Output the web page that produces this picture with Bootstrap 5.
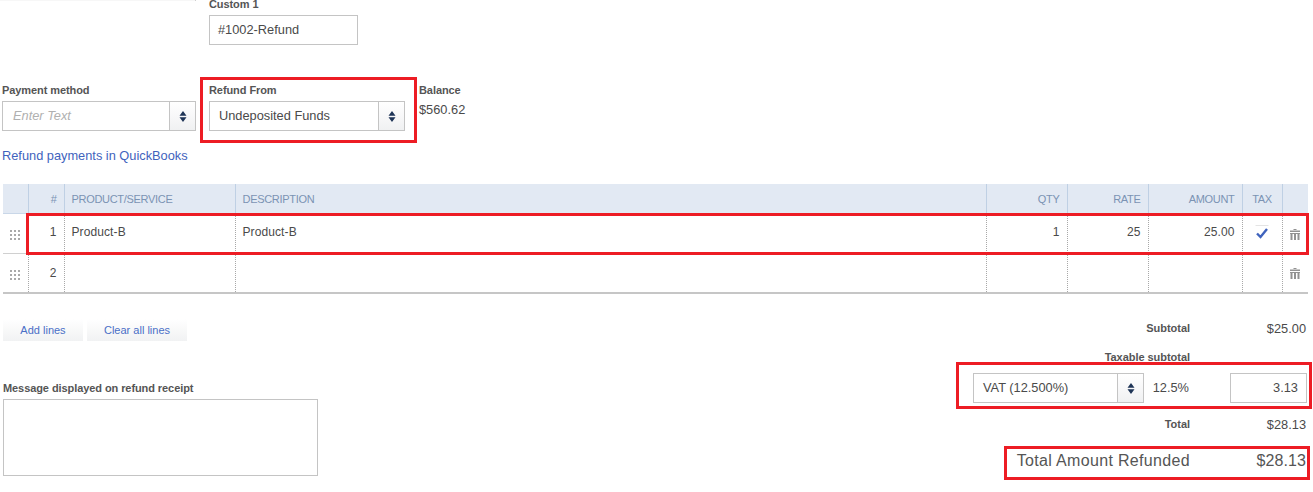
<!DOCTYPE html>
<html lang="en">
<head>
  <meta charset="UTF-8">
  <meta name="viewport" content="width=device-width, initial-scale=1.0">
  <title>Refund Receipt</title>
  <link href="https://cdn.jsdelivr.net/npm/bootstrap@5.3.0/dist/css/bootstrap.min.css" rel="stylesheet">
  <style>
    html, body { height: 492px; overflow: hidden; }
    body {
      background: #fff;
      color: #4a4a4a;
      font-family: "Liberation Sans", Arial, sans-serif;
      font-size: 12.8px;
    }
    .sheet { position: relative; width: 1313px; height: 492px; overflow: hidden; }
    .top-rule { width: 196px; height: 1px; background: #f7f7f7; border-right: 1px solid #cfcfcf; }

    .field-label { display: block; font-weight: 700; font-size: 11px; line-height: 13px; color: #555; margin: 0 0 4px; letter-spacing: -.08px; }
    .text-box { border: 1px solid #c4c4c4; background: #fff; height: 30px; padding: 0 8px; display: flex; align-items: center; }
    .combo { display: flex; height: 30px; border: 1px solid #c4c4c4; background: #fff; }
    .combo-value { flex: 1; display: flex; align-items: center; padding-left: 9px; }
    .combo-value.hint { font-style: italic; color: #b0b0b0; padding-left: 10px; }
    .combo-btn { width: 26px; border-left: 1px solid #c4c4c4; background: linear-gradient(#fff, #f0f1f2); display: flex; align-items: center; justify-content: center; }

    .custom-row { padding: 0 0 0 209px; margin-top: -1px; }
    .custom-row .field-label { line-height: 9px; margin-bottom: 6px; }
    .custom-row .text-box { width: 149px; }
    .pay-row { display: flex; margin-top: 39px; padding-left: 2px; }
    .pay-method { width: 194px; margin-right: 13px; }
    .refund-from { width: 196px; margin-right: 14px; }
    .balance { line-height: 13px; }
    .balance-val { margin-top: 6px; }
    .refund-link { display: block; margin: 17px 0 0 2px; line-height: 15px; color: #3f63bd; text-decoration: none; }

    .lines { table-layout: fixed; width: 1305px; margin: 21px 0 0 3px; border-collapse: collapse; }
    .lines th {
      height: 29px; background: #e2e9f3; color: #7b93b3; font-weight: 400; font-size: 11px; letter-spacing: -.3px;
      padding: 1px 7px 0; border-left: 1px solid #bfd0e4; border-bottom: 1px solid #c9d7e8; vertical-align: middle;
    }
    .lines th:first-child, .lines td:first-child { border-left: 0; }
    .lines td {
      height: 40px; padding: 0 7px 3px; border-left: 1px dotted #a8a8a8; border-bottom: 1px solid #d0d0d0;
      vertical-align: middle; font-size: 12px; letter-spacing: .1px;
    }
    .lines tr:last-child td { border-bottom: 2px solid #c6c6c6; padding-bottom: 0; }
    .lines td.cell-icon, .lines tr:last-child td.cell-icon { padding: 2px 0 0; text-align: center; }
    .lines td.check-cell { padding: 0 0 3px; }
    .lines td.grip-cell { padding: 3px 0 0 7px; }
    .lines tr:last-child td.grip-cell { padding-top: 5px; }
    .lines svg { display: block; margin: auto; }
    .lines .grip-cell svg { margin: 0; }

    .lower { display: flex; justify-content: space-between; padding: 0 7px 0 3px; }
    .line-btn {
      height: 22px; border: 0; border-radius: 0; padding: 0; background: linear-gradient(#fff, #f1f2f3);
      color: #4a6fc7; font-size: 11px; letter-spacing: 0; display: flex; align-items: center; justify-content: center;
    }
    .line-btn.add { width: 80px; }
    .line-btn.clear { width: 100px; }
    .btn-row { margin-top: 25px; gap: 4px; }
    .msg-label { margin: 41px 0 4px; }
    .msg-box { width: 315px; height: 77px; border: 1px solid #c4c4c4; }

    .totals { width: 340px; margin-top: 27px; }
    .total-line { display: flex; justify-content: flex-end; align-items: center; line-height: 15px; }
    .total-name { font-weight: 700; font-size: 11px; letter-spacing: -.04px; color: #555; text-align: right; }
    .total-val { width: 116px; text-align: right; }
    .line-taxable { margin-top: 14px; }
    .line-total { margin-top: 14px; }
    .line-grand { margin-top: 19px; }
    .tax-line { display: flex; align-items: center; justify-content: flex-end; margin: 8px -1px 0 0; }
    .tax-line .combo { width: 171px; }
    .tax-rate { width: 45px; text-align: right; }
    .tax-box { width: 77px; margin-left: 41px; justify-content: flex-end; }
    .grand { font-size: 16px; line-height: 20px; letter-spacing: .33px; color: #555; }
    .total-val.grand { letter-spacing: .1px; }

    .callout { position: absolute; border: 3px solid #ed1c24; pointer-events: none; }
    .c-refund { left: 200px; top: 77px; width: 217px; height: 66px; }
    .c-row { left: 26px; top: 213px; width: 1283px; height: 42px; }
    .c-tax { left: 956px; top: 362px; width: 356px; height: 47px; }
    .c-total { left: 1004px; top: 446px; width: 306px; height: 34px; }
  </style>
</head>
<body>
  <svg width="0" height="0" class="d-block">
    <defs>
      <symbol id="updown" viewBox="0 0 8 11"><path d="M4 0 7.500 4.700H.5zM4 11 .5 6.300h7z" fill="#1f3557"/></symbol>
      <symbol id="grip" viewBox="0 0 10 10"><path d="M0 0h2v2H0zM4 0h2v2H4zM8 0h2v2H8zM0 4h2v2H0zM4 4h2v2H4zM8 4h2v2H8zM0 8h2v2H0zM4 8h2v2H4zM8 8h2v2H8z" fill="#a9a9a9"/></symbol>
      <symbol id="trash" viewBox="0 0 10 11"><path d="M3.500 0h3v1h-3zM0 1.500h10V3H0zM.5 4.500h2V11h-2zM4 4.500h2V11H4zM7.500 4.500h2V11h-2zM0 4h10v1H0z" fill="#929292"/></symbol>
    </defs>
  </svg>

  <div class="sheet">
    <div class="top-rule"></div>

    <div class="custom-row">
      <label class="field-label">Custom 1</label>
      <div class="text-box">#1002-Refund</div>
    </div>

    <div class="pay-row">
      <div class="pay-method">
        <label class="field-label">Payment method</label>
        <div class="combo">
          <div class="combo-value hint">Enter Text</div>
          <div class="combo-btn"><svg width="8" height="11"><use href="#updown"/></svg></div>
        </div>
      </div>
      <div class="refund-from">
        <label class="field-label">Refund From</label>
        <div class="combo">
          <div class="combo-value">Undeposited Funds</div>
          <div class="combo-btn"><svg width="8" height="11"><use href="#updown"/></svg></div>
        </div>
      </div>
      <div class="balance">
        <label class="field-label mb-0">Balance</label>
        <div class="balance-val">$560.62</div>
      </div>
    </div>

    <a class="refund-link" href="#">Refund payments in QuickBooks</a>

    <table class="lines">
      <colgroup>
        <col style="width:25px"><col style="width:36px"><col style="width:171px"><col style="width:751px">
        <col style="width:81px"><col style="width:81px"><col style="width:94px"><col style="width:40px"><col style="width:26px">
      </colgroup>
      <thead>
        <tr>
          <th></th><th class="text-end">#</th><th>PRODUCT/SERVICE</th><th>DESCRIPTION</th>
          <th class="text-end">QTY</th><th class="text-end">RATE</th><th class="text-end">AMOUNT</th><th class="text-center px-0">TAX</th><th></th>
        </tr>
      </thead>
      <tbody>
        <tr>
          <td class="grip-cell"><svg width="10" height="10"><use href="#grip"/></svg></td>
          <td class="text-end">1</td><td>Product-B</td><td>Product-B</td>
          <td class="text-end">1</td><td class="text-end">25</td><td class="text-end">25.00</td>
          <td class="cell-icon check-cell"><svg width="14" height="14" viewBox="0 0 14 14"><path d="M.5 .5h13" stroke="#e4e4e4" fill="none"/><path d="M2 8.500 5.500 12 12 4" fill="none" stroke="#3f63bd" stroke-width="2.400"/></svg></td>
          <td class="cell-icon"><svg width="10" height="11"><use href="#trash"/></svg></td>
        </tr>
        <tr>
          <td class="grip-cell"><svg width="10" height="10"><use href="#grip"/></svg></td>
          <td class="text-end">2</td><td></td><td></td><td></td><td></td><td></td><td></td>
          <td class="cell-icon"><svg width="10" height="11"><use href="#trash"/></svg></td>
        </tr>
      </tbody>
    </table>

    <div class="lower">
      <div>
        <div class="d-flex btn-row">
          <button type="button" class="btn line-btn add">Add lines</button>
          <button type="button" class="btn line-btn clear">Clear all lines</button>
        </div>
        <label class="field-label msg-label">Message displayed on refund receipt</label>
        <div class="msg-box"></div>
      </div>
      <div class="totals">
        <div class="total-line"><span class="total-name">Subtotal</span><span class="total-val">$25.00</span></div>
        <div class="total-line line-taxable"><span class="total-name">Taxable subtotal</span><span class="total-val"></span></div>
        <div class="tax-line">
          <div class="combo">
            <div class="combo-value">VAT (12.500%)</div>
            <div class="combo-btn"><svg width="8" height="11"><use href="#updown"/></svg></div>
          </div>
          <div class="tax-rate">12.5%</div>
          <div class="text-box tax-box">3.13</div>
        </div>
        <div class="total-line line-total"><span class="total-name">Total</span><span class="total-val">$28.13</span></div>
        <div class="total-line line-grand"><span class="grand">Total Amount Refunded</span><span class="total-val grand">$28.13</span></div>
      </div>
    </div>

    <div class="callout c-refund"></div>
    <div class="callout c-row"></div>
    <div class="callout c-tax"></div>
    <div class="callout c-total"></div>
  </div>
  <script src="https://cdn.jsdelivr.net/npm/bootstrap@5.3.0/dist/js/bootstrap.bundle.min.js"></script>
</body>
</html>
